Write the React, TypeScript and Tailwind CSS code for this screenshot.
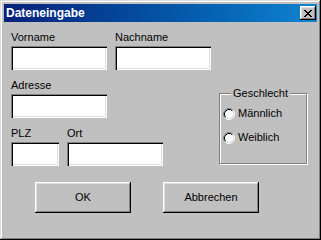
const font = "font-['Liberation_Sans',Arial,sans-serif]"

const sunken =
  'bg-white shadow-[inset_1px_1px_0_#808080,inset_2px_2px_0_#000,inset_-1px_-1px_0_#fff,inset_-2px_-2px_0_#dfdfdf]'

const raised =
  'bg-[#c0c0c0] shadow-[inset_-1px_-1px_0_#000,inset_1px_1px_0_#fff,inset_-2px_-2px_0_#808080,inset_2px_2px_0_#dfdfdf]'

function Field({ label, width }: { label: string; width: string }) {
  return (
    <div className={`flex flex-col ${width}`}>
      <span className="text-[11px] leading-[13px] text-black">{label}</span>
      <div className={`mt-[2px] h-[24px] ${sunken}`} />
    </div>
  )
}

function Radio({ label }: { label: string }) {
  return (
    <div className="flex items-center gap-[3px]">
      <svg width="12" height="12" viewBox="0 0 12 12">
        <circle cx="6" cy="6" r="4.5" fill="#fff" />
        <path d="M2.11 9.89 A5.5 5.5 0 0 1 9.89 2.11" fill="none" stroke="#808080" strokeWidth="1" />
        <path d="M9.89 2.11 A5.5 5.5 0 0 1 2.11 9.89" fill="none" stroke="#fff" strokeWidth="1" />
        <path d="M2.82 9.18 A4.5 4.5 0 0 1 9.18 2.82" fill="none" stroke="#000" strokeWidth="1" />
        <path d="M9.18 2.82 A4.5 4.5 0 0 1 2.82 9.18" fill="none" stroke="#dfdfdf" strokeWidth="1" />
      </svg>
      <span className="text-[11px] leading-[13px] text-black">{label}</span>
    </div>
  )
}

function CloseGlyph() {
  const rows = ['11000011', '01100110', '00111100', '00011000', '00111100', '01100110', '11000011']
  return (
    <svg width="8" height="7" viewBox="0 0 8 7" shapeRendering="crispEdges">
      {rows.flatMap((r, y) =>
        r.split('').map((c, x) => (c === '1' ? <rect key={`${x}-${y}`} x={x} y={y} width="1" height="1" fill="#000" /> : null))
      )}
    </svg>
  )
}

export default function App() {
  return (
    <div
      className={`${font} w-[321px] h-[240px] flex flex-col p-[4px] bg-[#c0c0c0] shadow-[inset_-1px_-1px_0_#000,inset_1px_1px_0_#dfdfdf,inset_-2px_-2px_0_#808080,inset_2px_2px_0_#fff]`}
    >
      <div className="h-[18px] flex items-center justify-between pl-[2px] pr-[1px] bg-gradient-to-r from-[#08207a] to-[#1084d0]">
        <span className="text-[12px] font-bold text-white leading-[14px]">Dateneingabe</span>
        <button className={`w-[16px] h-[14px] flex items-center justify-center ${raised}`}>
          <CloseGlyph />
        </button>
      </div>

      <div className="flex flex-col pl-[7px] pt-[9px]">
        <div className="flex gap-[8px]">
          <Field label="Vorname" width="w-[96px]" />
          <Field label="Nachname" width="w-[96px]" />
        </div>

        <div className="flex mt-[9px]">
          <div className="flex flex-col w-[208px]">
            <Field label="Adresse" width="w-[96px]" />
            <div className="flex gap-[8px] mt-[9px]">
              <Field label="PLZ" width="w-[48px]" />
              <Field label="Ort" width="w-[96px]" />
            </div>
          </div>
          <div className="relative mt-[14px] w-[88px] h-[71px] border border-[#808080] shadow-[1px_1px_0_#fff,inset_1px_1px_0_#fff]">
            <span className="absolute left-[11px] top-[-7px] px-[2px] bg-[#c0c0c0] text-[11px] leading-[13px] text-black">
              Geschlecht
            </span>
            <div className="flex flex-col gap-[11px] pt-[13px] pl-[3px]">
              <Radio label="Männlich" />
              <Radio label="Weiblich" />
            </div>
          </div>
        </div>

        <div className="flex gap-[32px] ml-[24px] mt-[16px]">
          <button className={`w-[96px] h-[31px] text-[11px] text-black ${raised}`}>OK</button>
          <button className={`w-[96px] h-[31px] text-[11px] text-black ${raised}`}>Abbrechen</button>
        </div>
      </div>
    </div>
  )
}
